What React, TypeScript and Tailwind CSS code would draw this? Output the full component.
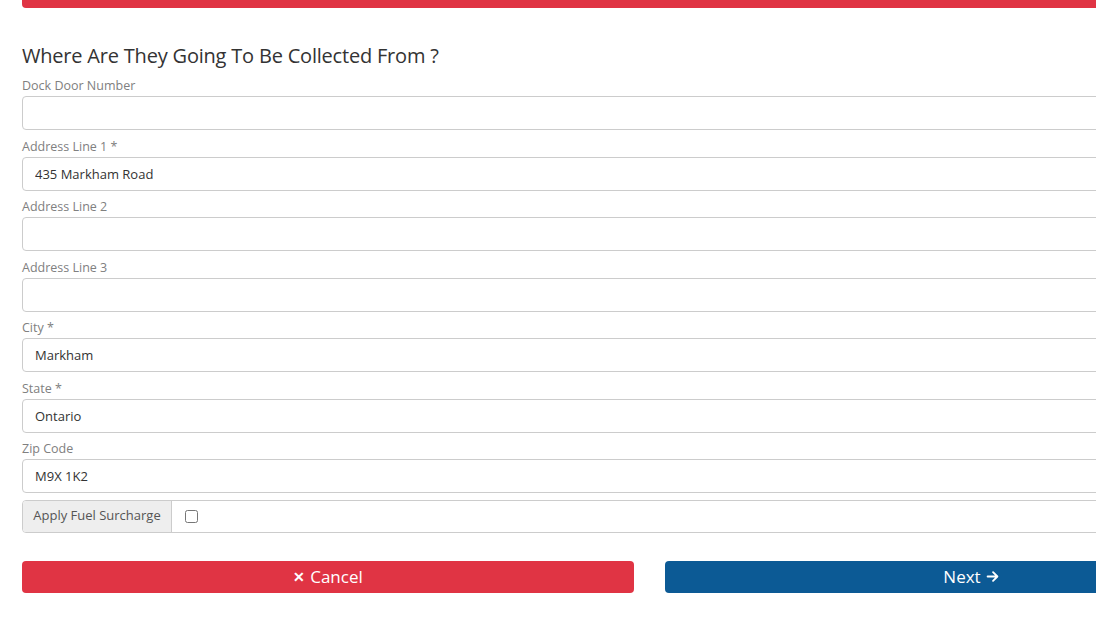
import React from "react";

const fields = [
  { label: "Dock Door Number", value: "" },
  { label: "Address Line 1 *", value: "435 Markham Road" },
  { label: "Address Line 2", value: "" },
  { label: "Address Line 3", value: "" },
  { label: "City *", value: "Markham" },
  { label: "State *", value: "Ontario" },
  { label: "Zip Code", value: "M9X 1K2" },
];

export default function App() {
  return (
    <div className="w-full h-[641px] overflow-hidden bg-white" style={{ fontFamily: '"Open Sans", sans-serif' }}>
      <div className="w-[1255px] ml-[22px]">
        <div className="h-[8px] bg-[#e03444] rounded-b-[4px]" />
        <h3 className="mt-[35px] text-[20px] leading-[26px] text-[#333] tracking-[-0.2px]">Where Are They Going To Be Collected From ?</h3>
        <div className="mt-[7px]">
          {fields.map((f) => (
            <div key={f.label} className="mb-[6.5px]">
              <label className="block text-[12.5px] leading-[20px] text-[#808080]">{f.label}</label>
              <input
                type="text"
                defaultValue={f.value}
                className="block w-full h-[34px] border border-[#ccc] rounded-[4px] px-[12px] text-[13px] text-[#333] outline-none"
              />
            </div>
          ))}
        </div>
        <div className="flex h-[33px] border border-[#ccc] rounded-[4px] overflow-hidden">
          <span className="w-[149px] flex items-center justify-center bg-[#eee] border-r border-[#ccc] text-[13px] text-[#555]">Apply Fuel Surcharge</span>
          <div className="flex items-center pl-[13px]">
            <input type="checkbox" className="w-[13px] h-[13px]" />
          </div>
        </div>
        <div className="flex gap-[31px] mt-[28px]">
          <button className="w-[612px] h-[32px] bg-[#e03444] rounded-[4px] text-white text-[17px] flex items-center justify-center gap-[5px]">
            <span className="text-[14px] font-bold">✕</span>Cancel
          </button>
          <button className="w-[612px] h-[32px] bg-[#0c5a95] rounded-[4px] text-white text-[17px] flex items-center justify-center gap-[5px]">
            Next
            <svg width="13" height="13" viewBox="0 0 24 24" fill="none" stroke="currentColor" strokeWidth="3.5" strokeLinecap="round" strokeLinejoin="round">
              <path d="M3 12h17M13 4l8 8-8 8" />
            </svg>
          </button>
        </div>
      </div>
    </div>
  );
}
